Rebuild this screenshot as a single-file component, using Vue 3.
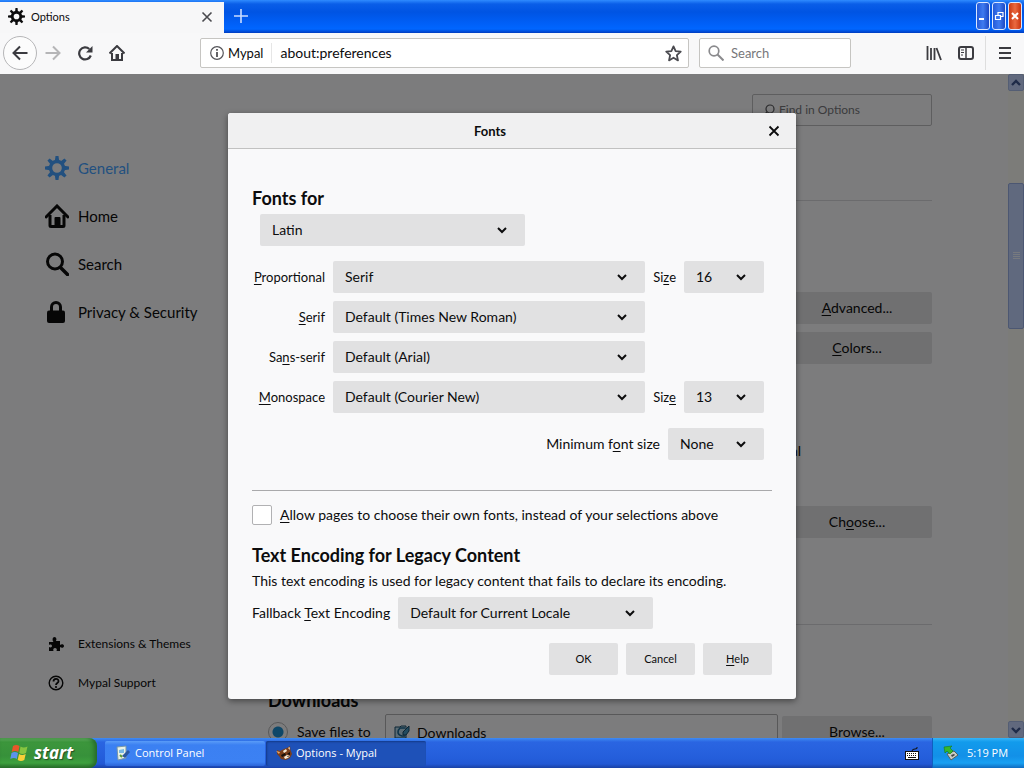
<script setup>
import { ref } from 'vue';

const url = ref('about:preferences');
const webSearch = ref('');
const optionSearch = ref('');
const folder = ref('Downloads');
const saveMode = ref('folder');
const language = ref('Latin');
const minSize = ref('None');
const encoding = ref('Default for Current Locale');
const allowPages = ref(false);

const categories = [
  { id: 'general', label: 'General' },
  { id: 'home', label: 'Home' },
  { id: 'search', label: 'Search' },
  { id: 'privacy', label: 'Privacy & Security' },
];

// label is split around its access key
const fontRows = ref([
  { id: 'proportional', label: ['', 'P', 'roportional'], value: 'Serif', size: '16', sizeLabel: ['Si', 'z', 'e'] },
  { id: 'serif', label: ['', 'S', 'erif'], value: 'Default (Times New Roman)' },
  { id: 'sans', label: ['Sa', 'n', 's-serif'], value: 'Default (Arial)' },
  { id: 'mono', label: ['', 'M', 'onospace'], value: 'Default (Courier New)', size: '13', sizeLabel: ['Siz', 'e', ''] },
]);

const teeth = [0, 45, 90, 135, 180, 225, 270, 315];
</script>

<template>
  <div class="desktop">
    <header class="titlebar">
      <div class="tab">
        <svg class="tab-icon" viewBox="0 0 24 24">
          <circle cx="12" cy="12" r="6" fill="none" stroke="#0c0c0d" stroke-width="4" />
          <path v-for="a in teeth" :key="a" d="M10 6 10.500 0h3l.5 6z" fill="#0c0c0d" :transform="`rotate(${a} 12 12)`" />
        </svg>
        <span class="tab-title">Options</span>
        <button class="tab-close" aria-label="Close tab">
          <svg viewBox="0 0 12 12"><path d="M1.500 1.500l9 9M10.500 1.500l-9 9" stroke="#4a4a4f" stroke-width="1.600" /></svg>
        </button>
      </div>
      <button class="new-tab" aria-label="New tab">
        <svg viewBox="0 0 14 14"><path d="M7 0v14M0 7h14" stroke="#c9dcff" stroke-width="1.600" /></svg>
      </button>
      <div class="window-buttons">
        <button class="win" aria-label="Minimize">
          <svg viewBox="0 0 12 26"><path d="M2 16h5" stroke="#fff" stroke-width="2" /></svg>
        </button>
        <button class="win" aria-label="Restore">
          <svg viewBox="0 0 12 26"><path d="M5 12V9.500h5v4H8M2.500 12.500h5v4h-5z" fill="none" stroke="#fff" stroke-width="1.200" /></svg>
        </button>
        <button class="win win-close" aria-label="Close">
          <svg viewBox="0 0 12 26"><path d="M3 10l6 6M9 10l-6 6" stroke="#fff" stroke-width="2" /></svg>
        </button>
      </div>
    </header>

    <nav class="toolbar">
      <button class="tool back" aria-label="Back">
        <svg viewBox="0 0 16 16"><path d="M15.500 8H1.500M8 1.500L1.500 8L8 14.500" fill="none" stroke="#3b3b40" stroke-width="2" /></svg>
      </button>
      <button class="tool" aria-label="Forward">
        <svg viewBox="0 0 16 16"><path d="M0.500 8h14M8 1.500L14.500 8L8 14.500" fill="none" stroke="#b5b5b7" stroke-width="2" /></svg>
      </button>
      <button class="tool" aria-label="Reload">
        <svg viewBox="0 0 16 16"><path d="M13.800 10.500A6 6 0 1 1 12.300 4" fill="none" stroke="#3b3b40" stroke-width="2.200" /><path d="M15.500 1v6.500H9z" fill="#3b3b40" /></svg>
      </button>
      <button class="tool" aria-label="Home">
        <svg viewBox="0 0 16 16"><path d="M.5 8.500L8 1l7.500 7.500" fill="none" stroke="#3b3b40" stroke-width="2" /><path d="M3 8v7h10V8" fill="none" stroke="#3b3b40" stroke-width="2" /><path d="M6.500 9h3.500v5.500H6.500z" fill="#3b3b40" /></svg>
      </button>

      <div class="urlbar">
        <svg class="info" viewBox="0 0 14 14"><circle cx="7" cy="7" r="6.300" fill="none" stroke="#55555a" stroke-width="1.200" /><path d="M7 6v5M7 3v1.800" stroke="#3b3b40" stroke-width="1.600" /></svg>
        <span class="identity">Mypal</span>
        <input v-model="url" aria-label="Address" />
        <button class="star" aria-label="Bookmark">
          <svg viewBox="0 0 16 16"><path d="M8 1.300l2 4.500 4.800.5-3.600 3.300 1 4.900L8 12l-4.200 2.500 1-4.900L1.200 6.300 6 5.800z" fill="none" stroke="#4a4a4f" stroke-width="1.700" stroke-linejoin="round" /></svg>
        </button>
      </div>
      <label class="searchbar">
        <svg viewBox="0 0 16 16"><circle cx="6" cy="6" r="4.800" fill="none" stroke="#8a8a8d" stroke-width="1.700" /><path d="M9.500 9.500l6 6" stroke="#8a8a8d" stroke-width="2" /></svg>
        <input v-model="webSearch" placeholder="Search" aria-label="Search" />
      </label>

      <div class="tools-right">
        <button class="tool" aria-label="Library">
          <svg viewBox="0 0 16 16"><path d="M1.500 1v14M5 3v12M8.500 3v12M10.500 3l4.500 12" stroke="#3b3b40" stroke-width="1.800" /></svg>
        </button>
        <button class="tool" aria-label="Sidebars">
          <svg viewBox="0 0 16 16"><rect x="1" y="2" width="14" height="12" rx="2" fill="none" stroke="#3b3b40" stroke-width="2" /><path d="M8 2v12" stroke="#3b3b40" stroke-width="1.500" /><path d="M3 5h3M3 7.500h3M3 10h2" stroke="#3b3b40" /></svg>
        </button>
        <button class="tool menu" aria-label="Menu">
          <svg viewBox="0 0 16 16"><path d="M2 3h12M2 8h12M2 13h12" stroke="#3b3b40" stroke-width="2" /></svg>
        </button>
      </div>
    </nav>

    <div class="page">
      <aside class="sidebar">
        <a v-for="c in categories" :key="c.id" href="#" class="category" :class="{ selected: c.id === 'general' }">
          <svg viewBox="0 0 24 24">
            <template v-if="c.id === 'general'">
              <circle cx="12" cy="12" r="6.500" fill="none" stroke="currentColor" stroke-width="3.400" />
              <path v-for="a in teeth" :key="a" d="M9.800 5 10.500 0h3l.7 5z" fill="currentColor" :transform="`rotate(${a} 12 12)`" />
            </template>
            <template v-else-if="c.id === 'home'">
              <path d="M1 13L12 2l11 11" fill="none" stroke="currentColor" stroke-width="3" stroke-linecap="round" />
              <path d="M5 11v10.500q0 1 1 1h12q1 0 1-1V11" fill="none" stroke="currentColor" stroke-width="3" />
              <path d="M9.500 14q0-1 1-1h4q1 0 1 1v8h-6z" fill="currentColor" />
            </template>
            <template v-else-if="c.id === 'search'">
              <circle cx="10" cy="9.500" r="7.500" fill="none" stroke="currentColor" stroke-width="3" />
              <path d="M15.500 15.500l7 7" stroke="currentColor" stroke-width="3.500" stroke-linecap="round" />
            </template>
            <template v-else>
              <path d="M6.500 12V7a4.500 4.500 0 0 1 9 0v5" fill="none" stroke="currentColor" stroke-width="3" />
              <rect x="2" y="10.500" width="18" height="12.500" rx="2" fill="currentColor" />
            </template>
          </svg>
          <span>{{ c.label }}</span>
        </a>
        <div class="sidebar-footer">
          <a href="#" class="footer-link">
            <svg viewBox="0 0 16 16"><path d="M1 6h4.500C4 4 4.500 1 6.500 1S9 4 7.800 5H12v4c1.500-1.500 4-1 4 1s-2.500 2.300-4 1v4H8.500c1-2-.3-3-1.500-3s-2.300 1-1.500 3H1v-4c1.500 1 3 .3 3-1s-1.500-2-3-1z" fill="currentColor" /></svg>
            <span>Extensions &amp; Themes</span>
          </a>
          <a href="#" class="footer-link">
            <svg viewBox="0 0 16 16"><circle cx="8" cy="8" r="6.800" fill="none" stroke="currentColor" stroke-width="1.400" /><path d="M5.500 6.500C5.500 3 10.500 3 10.500 6.200 10.500 8 8 8 8 10" fill="none" stroke="currentColor" stroke-width="1.800" /><circle cx="8" cy="12" r="1.100" fill="currentColor" /></svg>
            <span>Mypal Support</span>
          </a>
        </div>
      </aside>

      <main class="prefs">
        <label class="find">
          <svg viewBox="0 0 12 12"><circle cx="7" cy="5" r="4" fill="none" stroke="#55555a" stroke-width="1.200" /><path d="M4 8l-3 3" stroke="#55555a" stroke-width="1.200" /></svg>
          <input v-model="optionSearch" placeholder="Find in Options" aria-label="Find in Options" />
        </label>
        <section class="pref-group">
          <div class="pref-buttons">
            <button class="pref-button"><u>A</u>dvanced...</button>
            <button class="pref-button"><u>C</u>olors...</button>
          </div>
          <p class="language-note">Mypal</p>
          <button class="pref-button"><span>Ch<u>o</u>ose...</span></button>
        </section>
        <section class="downloads">
          <h2>Downloads</h2>
          <div class="save-row">
            <label class="save-label"><input v-model="saveMode" type="radio" value="folder" /><span>Save files to</span></label>
            <div class="folder">
              <svg viewBox="0 0 16 16"><path d="M1 3h5l1-1h5v12H1z" fill="#b9d9e8" stroke="#174b6b" /><path d="M11 4H6Q4 6 4 8q0 3 4 4h3" fill="none" stroke="#1d6791" stroke-width="1.600" /><path d="M15 2L9 8v3h3l3-4z" fill="#4596be" stroke="#174b6b" /></svg>
              <input v-model="folder" aria-label="Download folder" />
            </div>
            <button class="pref-button">Browse...</button>
          </div>
        </section>
      </main>

      <div class="scrollbar">
        <button class="scroll-arrow" aria-label="Scroll up"><svg viewBox="0 0 10 10"><path d="M1 7l4-4 4 4" fill="none" stroke="#3c5590" stroke-width="2.400" /></svg></button>
        <div class="track-top"></div>
        <div class="thumb"><i></i><i></i><i></i><i></i></div>
        <div class="track"></div>
        <button class="scroll-arrow" aria-label="Scroll down"><svg viewBox="0 0 10 10"><path d="M1 3l4 4 4-4" fill="none" stroke="#3c5590" stroke-width="2.400" /></svg></button>
      </div>

      <div class="overlay">
        <div class="dialog" role="dialog" aria-labelledby="dialog-title">
          <div class="dialog-header">
            <h1 id="dialog-title">Fonts</h1>
            <button class="dialog-close" aria-label="Close">
              <svg viewBox="0 0 12 12"><path d="M1.500 1.500l9 9M10.500 1.500l-9 9" stroke="#0c0c0d" stroke-width="1.800" /></svg>
            </button>
          </div>
          <form class="dialog-body" @submit.prevent>
            <label for="language" class="heading">Fonts for</label>
            <div class="select language">
              <select id="language" v-model="language"><option>Latin</option></select>
              <svg viewBox="0 0 10 10"><path d="M1 3l4 4 4-4" /></svg>
            </div>

            <div class="font-grid">
              <template v-for="row in fontRows" :key="row.id">
                <label :for="row.id" class="font-label">{{ row.label[0] }}<u>{{ row.label[1] }}</u>{{ row.label[2] }}</label>
                <div class="select">
                  <select :id="row.id" v-model="row.value"><option>{{ row.value }}</option></select>
                  <svg viewBox="0 0 10 10"><path d="M1 3l4 4 4-4" /></svg>
                </div>
                <template v-if="row.size">
                  <label :for="row.id + '-size'" class="size-label">{{ row.sizeLabel[0] }}<u>{{ row.sizeLabel[1] }}</u>{{ row.sizeLabel[2] }}</label>
                  <div class="select">
                    <select :id="row.id + '-size'" v-model="row.size"><option>{{ row.size }}</option></select>
                    <svg viewBox="0 0 10 10"><path d="M1 3l4 4 4-4" /></svg>
                  </div>
                </template>
              </template>
            </div>

            <div class="min-row">
              <label for="min-size">Minimum f<u>o</u>nt size</label>
              <div class="select min-select">
                <select id="min-size" v-model="minSize"><option>None</option></select>
                <svg viewBox="0 0 10 10"><path d="M1 3l4 4 4-4" /></svg>
              </div>
            </div>

            <label class="allow">
              <input v-model="allowPages" type="checkbox" />
              <span><u>A</u>llow pages to choose their own fonts, instead of your selections above</span>
            </label>

            <h2 class="heading">Text Encoding for Legacy Content</h2>
            <p class="description">This text encoding is used for legacy content that fails to declare its encoding.</p>
            <div class="encoding-row">
              <label for="encoding">Fallback <u>T</u>ext Encoding</label>
              <div class="select encoding">
                <select id="encoding" v-model="encoding"><option>Default for Current Locale</option></select>
                <svg viewBox="0 0 10 10"><path d="M1 3l4 4 4-4" /></svg>
              </div>
            </div>

            <div class="actions">
              <button>OK</button>
              <button>Cancel</button>
              <button><u>H</u>elp</button>
            </div>
          </form>
        </div>
      </div>
    </div>

    <footer class="taskbar">
      <button class="start">
        <svg viewBox="0 0 20 18">
          <path d="M3 2q3-2 6.500 0L8.300 8Q5 6 1.700 8z" fill="#e8572a" />
          <path d="M10.500 2.600q3 2 7 0L16 9q-3.500 2-6.700 0z" fill="#86c440" />
          <path d="M1.500 9q3-2 6.500 0L6.800 15Q4 13 .3 15z" fill="#5c93ec" />
          <path d="M9 10q3 2 6.700 0l-1.400 6q-3.300 2-6.600 0z" fill="#f9cf38" />
        </svg>
        <span>start</span>
      </button>
      <button class="task">
        <svg viewBox="0 0 16 16"><path d="M2 2l9-1v12l-8 2z" fill="#e9f2e6" stroke="#7796a8" /><path d="M4 5l5-1v4H4z" fill="#78b9e5" /><path d="M7 11l6-6 2 2-5 6z" fill="#2c579e" /><path d="M5 10l2 2" stroke="#5b9b38" stroke-width="2" /></svg>
        <span>Control Panel</span>
      </button>
      <button class="task active">
        <svg viewBox="0 0 16 16"><path d="M1 5l3 1 4-2 3-1 3-2 .5 4L16 9l-2 4-4 2-5-1-2-3-2-2z" fill="#7a3d1a" /><path d="M0 6l4 1-1 2z" fill="#e9a86a" /><path d="M7 6l3-2 1 2-3 2zM12 3l1.500-1 .5 3z" fill="#f4e6cf" /><path d="M5 10l4-2 1 2-4 2zM11 9l3-2v3z" fill="#16100d" /><path d="M8 12l3-2 3 1-2 2-3 1z" fill="#f6ead8" /><path d="M11 11h2l-1 1z" fill="#111" /></svg>
        <span>Options - Mypal</span>
      </button>
      <svg class="keyboard" viewBox="0 0 14 14"><path d="M7 5q0-2 3-2t2-2" fill="none" stroke="#111" /><rect x=".5" y="5.500" width="13" height="8" fill="#fff" stroke="#111" /><path d="M2 7.500h10M2 9.500h10" stroke="#111" stroke-dasharray="1 1" /><path d="M3 11.500h8" stroke="#111" /></svg>
      <div class="tray">
        <svg viewBox="0 0 16 16"><path d="M4 9l7-3 4 4-7 5z" fill="#c9cdc6" stroke="#56605a" /><path d="M8 10l3-1 1 1-3 2z" fill="#444" /><path d="M1 2l8-1-2 2 3 3-3 3-3-3-2 2z" fill="#35b82b" stroke="#187a18" stroke-width=".6" /></svg>
        <time>5:19 PM</time>
      </div>
    </footer>
  </div>
</template>

<style>
body {
  margin: 0;
}
</style>

<style scoped>
.desktop {
  display: flex;
  flex-direction: column;
  height: 100vh;
  overflow: hidden;
  font-family: Lato, sans-serif;
  font-size: 14px;
  line-height: 20px;
  color: #0c0c0d;
}

.desktop * {
  box-sizing: border-box;
}

svg {
  display: block;
  flex: none;
}

button,
input,
select {
  margin: 0;
  padding: 0;
  border: 0;
  background: none;
  color: inherit;
  font: inherit;
}

input {
  min-width: 0;
  outline: none;
}

input::placeholder {
  color: #77777a;
  opacity: 1;
}

a {
  color: inherit;
  text-decoration: none;
}

u {
  text-underline-offset: 2px;
}

/* Title bar */
.titlebar {
  display: flex;
  flex: none;
  height: 33px;
  background: linear-gradient(#2f8bff 0, #0a5ee8 4px, #0054e3 12px, #0060f8 24px, #0066ff 29px, #003cc0 33px);
}

.tab {
  display: flex;
  align-items: center;
  width: 224px;
  margin-top: 2px;
  padding: 0 11px 2px 8px;
  background: #f7f7f8;
  font-size: 11px;
}

.tab-icon {
  width: 17px;
  height: 17px;
}

.tab-title {
  flex: 1;
  margin-left: 6px;
}

.tab-close svg {
  width: 12px;
  height: 12px;
}

.new-tab {
  width: 34px;
  padding: 0 10px 2px;
}

.new-tab svg {
  width: 14px;
  height: 14px;
}

.window-buttons {
  display: flex;
  gap: 2px;
  margin-left: auto;
  padding: 2px 2px 3px;
}

.win {
  width: 14px;
  border: 1px solid #dce8ff;
  border-radius: 3px;
  background: linear-gradient(90deg, #2459d8, #3f7bf0 50%, #1c48c4);
}

.win svg {
  width: 12px;
  height: 26px;
}

.win-close {
  background: linear-gradient(90deg, #c93a15, #ea6a41 50%, #c8330f);
}

/* Toolbar */
.toolbar {
  display: flex;
  align-items: center;
  flex: none;
  height: 41px;
  padding: 0 8px 1px 3px;
  background: #f8f8f9;
}

.tool {
  display: flex;
  align-items: center;
  justify-content: center;
  width: 32px;
  height: 34px;
}

.tool svg {
  width: 16px;
  height: 16px;
}

.back {
  width: 34px;
  border: 1px solid #b6b6b8;
  border-radius: 50%;
  background: #fcfcfc;
}

.urlbar,
.searchbar {
  display: flex;
  align-items: center;
  height: 30px;
  border: 1px solid #c6c5c2;
  border-radius: 2px;
  background: #fff;
  font-size: 13px;
}

.urlbar {
  flex: 1;
  margin-left: 67px;
  padding: 0 6px 0 9px;
}

.info {
  width: 14px;
  height: 14px;
}

.identity {
  margin-left: 4px;
  padding-right: 8px;
  border-right: 1px solid #e6e6e6;
}

.urlbar input {
  flex: 1;
  margin-left: 8px;
  font-size: 14px;
}

.star svg {
  width: 17px;
  height: 17px;
}

.searchbar {
  width: 152px;
  margin-left: 10px;
  padding: 0 8px;
}

.searchbar svg {
  width: 16px;
  height: 16px;
  margin-right: 7px;
}

.searchbar input {
  width: 100%;
}

.tools-right {
  display: flex;
  margin-left: 67px;
}

.menu {
  margin-left: 3px;
  border-left: 1px solid #dedede;
  width: 38px;
  margin-right: -7px;
}

/* Options page */
.page {
  position: relative;
  display: flex;
  flex: 1;
  min-height: 0;
  overflow: hidden;
  background: #f9f9fa;
}

.sidebar {
  display: flex;
  flex-direction: column;
  width: 268px;
  padding: 70px 0 36px 45px;
}

.category {
  display: flex;
  align-items: center;
  height: 48px;
  font-size: 15px;
}

.category svg {
  width: 24px;
  height: 24px;
  margin-right: 9px;
}

.category.selected {
  color: #45a1ff;
}

.sidebar-footer {
  margin-top: auto;
}

.footer-link {
  display: flex;
  align-items: center;
  height: 39px;
  font-size: 12px;
}

.footer-link svg {
  width: 16px;
  height: 16px;
  margin: 0 14px 0 3px;
}

.prefs {
  flex: 1;
  max-width: 664px;
  padding-top: 20px;
}

.find {
  display: flex;
  align-items: center;
  width: 180px;
  height: 32px;
  margin-left: auto;
  padding: 0 10px;
  border: 1px solid #bdbdbf;
  border-radius: 2px;
  font-size: 12px;
}

.find svg {
  width: 12px;
  height: 12px;
  margin-right: 4px;
}

.find input {
  width: 100%;
}

.pref-group {
  display: flex;
  flex-direction: column;
  align-items: flex-end;
  margin-top: 74px;
  padding-top: 91px;
  border-top: 1px solid #d7d7db;
}

.pref-buttons {
  display: flex;
  flex-direction: column;
  gap: 8px;
}

.pref-button {
  width: 150px;
  height: 32px;
  border-radius: 2px;
  background: #e0e0e2;
}

.language-note {
  margin: 77px 131px 45px 0;
}

.downloads {
  margin-top: 86px;
  padding-top: 65px;
  border-top: 1px solid #d7d7db;
}

.downloads h2 {
  margin: 0 0 4px;
  font-size: 18px;
  line-height: 20px;
}

.save-row {
  display: flex;
  gap: 4px;
  line-height: 12px;
}

.save-label {
  display: flex;
  align-items: center;
  width: 113px;
  height: 36px;
}

.save-label input {
  appearance: none;
  width: 20px;
  height: 20px;
  margin-right: 9px;
  border: 1px solid #b1b1b3;
  border-radius: 50%;
  background: radial-gradient(circle, #1d8ed0 0, #1d8ed0 5px, #f9f9fa 6px);
}

.folder {
  display: flex;
  flex: 1;
  align-items: center;
  height: 36px;
  padding: 0 8px;
  border: 1px solid #b1b1b3;
  border-radius: 2px;
}

.folder svg {
  width: 16px;
  height: 16px;
  margin-right: 7px;
}

.save-row .pref-button {
  margin-top: 2px;
}

/* XP scroll bar */
.scrollbar {
  display: flex;
  flex-direction: column;
  width: 16px;
  margin-left: auto;
  background: #f8f8f2;
}

.scroll-arrow {
  display: flex;
  align-items: center;
  justify-content: center;
  width: 16px;
  height: 17px;
  border: 1px solid #a9bce8;
  border-radius: 2px;
  background: #c3d3fd;
}

.scroll-arrow svg {
  width: 10px;
  height: 10px;
}

.track-top {
  flex: 92;
}

.thumb {
  display: flex;
  flex-direction: column;
  align-items: center;
  justify-content: center;
  gap: 1px;
  flex: 145;
  border: 1px solid #98aee4;
  border-radius: 2px;
  background: #c1d2fc;
}

.thumb i {
  width: 7px;
  height: 1px;
  background: #eef4fe;
}

.track {
  flex: 393;
}

/* Fonts dialog */
.overlay {
  position: absolute;
  inset: 0;
  display: flex;
  align-items: center;
  justify-content: center;
  background: rgba(0, 0, 0, 0.5);
}

.dialog {
  width: 568px;
  border-radius: 3px;
  background: #f9f9fa;
  box-shadow: 0 2px 6px rgba(0, 0, 0, 0.45);
  overflow: hidden;
}

.dialog-header {
  display: flex;
  align-items: center;
  height: 36px;
  padding: 0 16px 0 0;
  border-bottom: 1px solid #c1c1c1;
  background: #f0f0f1;
}

.dialog-header h1 {
  flex: 1;
  margin: 0 16px 0 0;
  font-size: 13px;
  text-align: center;
}

.dialog-close svg {
  width: 12px;
  height: 12px;
}

.dialog-body {
  display: flex;
  flex-direction: column;
  padding: 37px 24px 24px;
}

.heading {
  margin: 0;
  font-size: 18px;
  font-weight: bold;
  line-height: 24px;
}

.select {
  position: relative;
}

.select select {
  display: block;
  appearance: none;
  width: 100%;
  height: 32px;
  padding: 0 36px 0 12px;
  border-radius: 2px;
  background: #e1e1e2;
}

.select svg {
  position: absolute;
  top: 11px;
  right: 18px;
  width: 10px;
  height: 10px;
  fill: none;
  stroke: #0c0c0d;
  stroke-width: 2;
  pointer-events: none;
}

.language {
  width: 265px;
  margin: 4px 0 15px 8px;
}

.font-grid {
  display: grid;
  grid-template-columns: 73px 1fr auto 80px;
  align-items: center;
  gap: 8px;
  margin-right: 8px;
}

.font-label {
  grid-column: 1;
  font-size: 13px;
  text-align: right;
}

.size-label {
  font-size: 13px;
}

.min-row {
  display: flex;
  align-items: center;
  justify-content: flex-end;
  gap: 8px;
  margin: 15px 0 30px;
  padding-right: 8px;
}

.min-select {
  width: 96px;
}

.allow {
  display: flex;
  align-items: center;
  gap: 8px;
  padding: 14px 0 18px;
  border-top: 1px solid #a9a9ab;
}

.allow input {
  appearance: none;
  width: 20px;
  height: 20px;
  border: 1px solid #b1b1b3;
  border-radius: 2px;
  background: #fff;
}

.description {
  margin: 4px 0 6px;
}

.encoding-row {
  display: flex;
  align-items: center;
  gap: 8px;
}

.encoding {
  width: 255px;
}

.actions {
  display: flex;
  justify-content: flex-end;
  gap: 8px;
  margin-top: 14px;
}

.actions button {
  width: 69px;
  height: 32px;
  border-radius: 2px;
  background: #e1e1e2;
  font-size: 11px;
}

/* Taskbar */
.taskbar {
  display: flex;
  align-items: center;
  flex: none;
  height: 30px;
  background: linear-gradient(#3f8cf3 0, #2a65e2 4px, #245edb 20px, #2258d4 26px, #1941a5 30px);
  color: #fff;
  font-family: "Open Sans", sans-serif;
  font-size: 11px;
}

.start {
  display: flex;
  align-items: center;
  gap: 4px;
  width: 97px;
  height: 30px;
  padding-left: 10px;
  border-radius: 0 8px 8px 0;
  background: linear-gradient(#6cbb6a 0, #3c963c 4px, #37913a 18px, #3da03e 25px, #286f2a 30px);
  box-shadow: inset -3px 0 4px #276b2a;
  font-size: 17px;
  font-style: italic;
  font-weight: bold;
  text-shadow: 1px 1px 1px #234d24;
}

.start svg {
  width: 20px;
  height: 18px;
}

.task {
  display: flex;
  align-items: center;
  gap: 4px;
  width: 160px;
  height: 25px;
  margin-left: 8px;
  padding-left: 10px;
  border-radius: 2px;
  background: linear-gradient(#5a9cf8 0, #3b80f2 4px, #3c81f3 21px, #2b64d8 25px);
}

.task svg {
  width: 16px;
  height: 16px;
}

.task.active {
  margin-left: 1px;
  background: #1e51b8;
  box-shadow: inset 1px 1px 2px #143a88;
}

.keyboard {
  width: 14px;
  height: 14px;
  margin-left: auto;
}

.tray {
  display: flex;
  align-items: center;
  width: 92px;
  height: 30px;
  margin-left: 13px;
  padding-left: 10px;
  border-left: 1px solid #0f5fc0;
  background: linear-gradient(#35b4f8 0, #129bec 4px, #1290e8 18px, #18a0f2 25px, #0f6bc0 30px);
}

.tray svg {
  width: 16px;
  height: 16px;
  margin-right: 8px;
}
</style>
